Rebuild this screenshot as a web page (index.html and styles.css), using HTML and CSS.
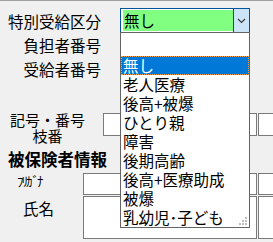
FILE: index.html
```html
<!DOCTYPE html>
<html lang="ja">
  <head>
    <meta charset="UTF-8" />
    <title>受給者情報</title>
    <link rel="stylesheet" href="styles.css">
  </head>
  <body>
    <div class="screen">
      <!-- 特別受給区分 -->
      <div class="row row-kubun">
        <span class="label label-right">特別受給区分</span>
        <div class="combo">
          <div class="combo-field"><span class="combo-text">無し</span></div>
          <div class="combo-btn">
            <svg width="9" height="6" viewBox="0 0 9 6">
              <path d="M1 1 L4.5 4.5 L8 1" fill="none" stroke="#3c3c3c" stroke-width="1.2" />
            </svg>
          </div>
        </div>
      </div>

      <div class="row row-plain">
        <span class="label label-right">負担者番号</span>
        <span class="field field-num"></span>
      </div>
      <div class="row row-plain">
        <span class="label label-right">受給者番号</span>
        <span class="field field-num"></span>
      </div>

      <div class="row row-kigo">
        <div class="label-stack">
          <span>記号・番号</span>
          <span>枝番</span>
        </div>
        <span class="field field-kigo"></span>
        <span class="field field-eda"></span>
      </div>

      <h2 class="section-title">被保険者情報</h2>

      <div class="row row-kana">
        <span class="label label-kana">ﾌﾘｶﾞﾅ</span>
        <span class="field field-name"></span>
        <span class="field field-side"></span>
      </div>
      <div class="row row-name">
        <span class="label label-name">氏名</span>
        <span class="field field-name"></span>
        <span class="field field-side"></span>
      </div>

      <!-- 開いているドロップダウン -->
      <ul class="droplist">
        <li class="item item-blank"></li>
        <li class="item selected">無し</li>
        <li class="item">老人医療</li>
        <li class="item">後高+被爆</li>
        <li class="item">ひとり親</li>
        <li class="item">障害</li>
        <li class="item">後期高齢</li>
        <li class="item">後高+医療助成</li>
        <li class="item">被爆</li>
        <li class="item">乳幼児･子ども</li>
        <li class="grip">
          <svg width="9" height="9" viewBox="0 0 9 9">
            <rect x="6" y="0" width="2" height="2" fill="#bdbdbd" />
            <rect x="3" y="3" width="2" height="2" fill="#bdbdbd" />
            <rect x="6" y="3" width="2" height="2" fill="#bdbdbd" />
            <rect x="0" y="6" width="2" height="2" fill="#bdbdbd" />
            <rect x="3" y="6" width="2" height="2" fill="#bdbdbd" />
            <rect x="6" y="6" width="2" height="2" fill="#bdbdbd" />
          </svg>
        </li>
      </ul>
    </div>
  </body>
</html>
```

FILE: styles.css
```css
:root {
  --bg-color: #f0f0f0;
  --field-border: #7a7a7a;
  --text-color: #000000;
  --select-color: #0078d7;
}

* {
  margin: 0;
  padding: 0;
  box-sizing: border-box;
}

body {
  background-color: var(--bg-color);
  color: var(--text-color);
  font-family: "Noto Sans CJK JP", "Noto Sans", sans-serif;
  font-size: 15.5px;
}

.screen {
  position: relative;
  width: 273px;
  height: 242px;
  overflow: hidden;
  border-top: 1px solid #a0a0a0;
}

.row {
  display: flex;
}

.label {
  white-space: nowrap;
  line-height: 18px;
  flex-shrink: 0;
}

.label-right {
  width: 101px;
  text-align: right;
}

.field {
  display: block;
  background-color: white;
  border: 1px solid var(--field-border);
  flex-shrink: 0;
}

/* 特別受給区分 */
.row-kubun {
  margin-top: 7px;
  height: 25px;
  align-items: center;
}

.combo {
  display: flex;
  flex-shrink: 0;
  margin-left: 19px;
  width: 130px;
  height: 25px;
  border: 1px solid #005499;
  background-color: white;
}

.combo-field {
  flex: 1;
  padding: 1px 0 1px 2px;
}

.combo-text {
  display: block;
  height: 100%;
  background-color: #80ff80;
  line-height: 21px;
  padding-left: 1px;
}

.combo-btn {
  width: 16px;
  border-left: 1px solid #005499;
  background-color: #cce4f7;
  display: flex;
  align-items: center;
  justify-content: center;
}

.row-plain {
  height: 24px;
  align-items: center;
}

.field-num {
  margin-left: 19px;
  width: 110px;
  height: 22px;
}

/* 記号・番号 */
.row-kigo {
  margin-top: 30px;
  align-items: flex-start;
}

.label-stack {
  width: 95px;
  flex-shrink: 0;
  display: flex;
  flex-direction: column;
  align-items: center;
  white-space: nowrap;
  line-height: 16px;
  font-size: 15px;
  padding-top: 1px;
}

.field-kigo {
  margin-left: 8px;
  margin-top: 2px;
  width: 154px;
  height: 23px;
}

.field-eda {
  margin-left: 1px;
  margin-top: 2px;
  width: 40px;
  height: 23px;
}

.section-title {
  margin-top: 5px;
  padding-left: 8px;
  font-size: 16.5px;
  font-weight: bold;
  line-height: 20px;
}

/* 被保険者情報 */
.row-kana {
  margin-top: 4px;
  align-items: flex-start;
}

.label-kana {
  width: 83px;
  padding-left: 17px;
  padding-top: 1px;
  font-size: 13px;
  letter-spacing: -2px;
  line-height: 14px;
}

.row-kana .field {
  height: 22px;
}

.row-name {
  margin-top: 1px;
  align-items: flex-start;
}

.label-name {
  width: 83px;
  padding-left: 23px;
  padding-top: 3px;
}

.row-name .field {
  height: 43px;
}

.field-name {
  width: 174px;
}

.field-side {
  margin-left: 1px;
  width: 40px;
}

/* ドロップダウンリスト */
.droplist {
  position: absolute;
  left: 120px;
  top: 31px;
  width: 130px;
  height: 196px;
  list-style: none;
  background-color: white;
  border: 1px solid #646464;
}

.item {
  height: 19px;
  line-height: 19px;
  padding-left: 2px;
  white-space: nowrap;
}

.item-blank {
  height: 23px;
}

.item.selected {
  background-color: var(--select-color);
  color: white;
  outline: 1px dotted #f5a040;
  outline-offset: -1px;
}

.grip {
  position: absolute;
  right: 1px;
  bottom: 1px;
  line-height: 0;
}
```
